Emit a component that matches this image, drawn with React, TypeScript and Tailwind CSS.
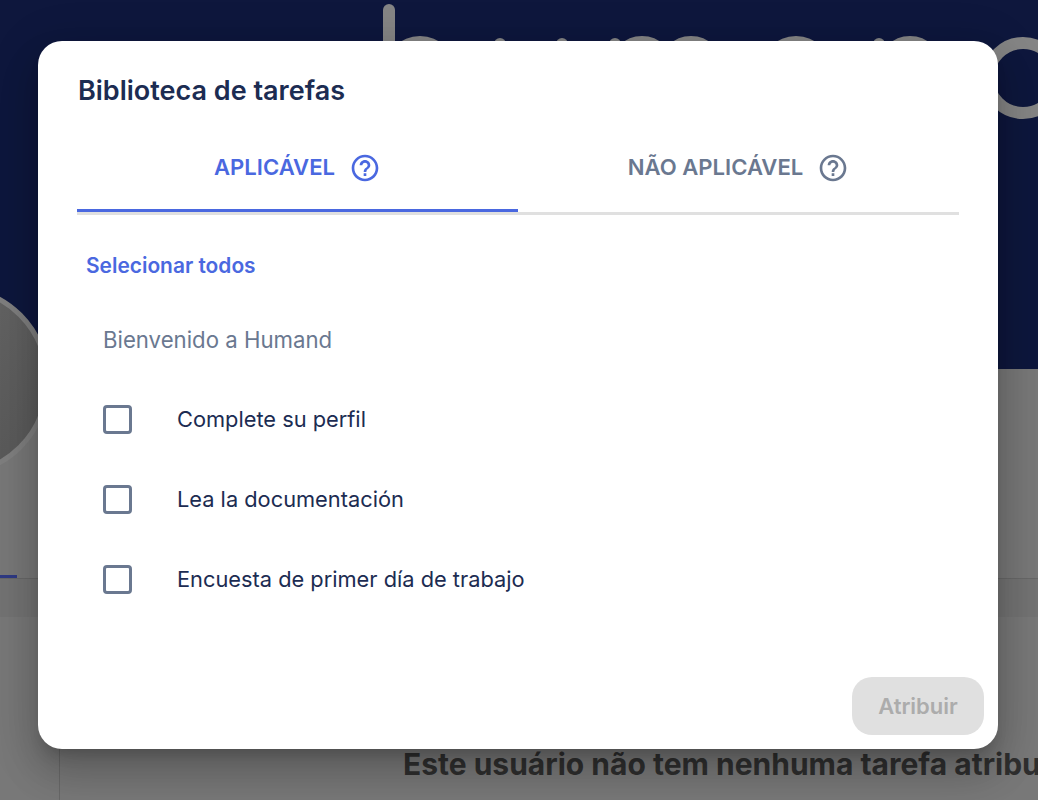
import React from "react";

function HelpIcon({ className }: { className: string }) {
  return (
    <svg viewBox="0 0 24 24" className={className} fill="currentColor" aria-hidden="true">
      <path d="M11 18h2v-2h-2v2zm1-16C6.48 2 2 6.48 2 12s4.48 10 10 10 10-4.48 10-10S17.52 2 12 2zm0 18c-4.41 0-8-3.59-8-8s3.59-8 8-8 8 3.59 8 8-3.59 8-8 8zm0-14c-2.21 0-4 1.79-4 4h2c0-1.1.9-2 2-2s2 .9 2 2c0 2-3 1.75-3 5h2c0-2.25 3-2.5 3-5 0-2.21-1.79-4-4-4z" />
    </svg>
  );
}

function Task({ label }: { label: string }) {
  return (
    <label className="flex h-20 items-center">
      <span className="ml-[65px] box-border size-[29px] shrink-0 rounded-[4px] border-[3px] border-[#6a7890] bg-white" />
      <span className="ml-[45px] text-[21.8px] leading-7 text-[#1c2c52]">{label}</span>
    </label>
  );
}

export default function App() {
  return (
    <div
      className="relative h-[800px] w-[1038px] overflow-hidden bg-[#787878]"
      style={{ fontFamily: "Inter, 'Liberation Sans', sans-serif" }}
    >
      <header className="relative h-[369px] overflow-hidden bg-[#0e173d]">
        <svg className="absolute inset-0" width="1038" height="369" aria-hidden="true">
          <g fill="none" stroke="#858585" strokeWidth="12" strokeLinecap="round">
            <path d="M389 10V70" />
            <path d="M390 72A30 30 0 0 1 450 72" />
            <path d="M500 44V70" />
            <path d="M562 44V70" />
            <path d="M615 44V70" />
            <path d="M616 68A26 26 0 0 1 668 68" />
            <path d="M665 68A26 26 0 0 1 717 68" />
            <path d="M766 72A30 30 0 0 1 826 72" />
            <path d="M879 44V70" />
            <path d="M884 68A26 26 0 0 1 936 68" />
            <circle cx="1023" cy="78" r="35" />
          </g>
        </svg>
      </header>
      <div className="absolute left-[-142px] top-[285px] size-[192px] rounded-full border-[5px] border-[#7f7f7f] bg-gradient-to-br from-[#6a6a6a] to-[#585858]" />

      <div className="relative h-[209px]">
        <div className="absolute bottom-0 left-0 h-[3px] w-[17px] bg-[#2f3a84]" />
      </div>
      <div className="h-[39px] border-t border-[#686868] bg-[#737373]" />
      <div className="flex h-[183px]">
        <div className="w-[60px] shrink-0 border-r border-[#686868]" />
        <p className="ml-[343px] mt-[129px] whitespace-nowrap text-[30px] font-bold leading-9 text-[#2f2f2f]">
          Este usuário não tem nenhuma tarefa atribuída
        </p>
      </div>

      <div
        role="dialog"
        className="absolute left-[38px] top-[41px] flex h-[708px] w-[960px] flex-col rounded-[24px] bg-white shadow-[0_11px_15px_-7px_rgba(0,0,0,0.2),0_24px_38px_3px_rgba(0,0,0,0.14),0_9px_46px_8px_rgba(0,0,0,0.12)]"
      >
        <h2 className="ml-10 mt-[33px] text-[27px] font-semibold leading-[34px] text-[#1c2c52]">
          Biblioteca de tarefas
        </h2>
        <div className="mx-[39px] mt-[19px] flex h-[88px] border-b-[3px] border-[#e0e0e0]">
          <div className="flex w-[441px] items-center justify-center gap-[14px] border-b-[3px] border-[#4a68e0] text-[#4a68e0]">
            <span className="text-[22.1px] font-semibold">APLICÁVEL</span>
            <HelpIcon className="size-8" />
          </div>
          <div className="flex w-[441px] items-center justify-center gap-[14px] border-b-[3px] border-transparent text-[#6a7890]">
            <span className="text-[22.1px] font-semibold">NÃO APLICÁVEL</span>
            <HelpIcon className="size-8" />
          </div>
        </div>
        <button className="ml-[48px] mt-[37px] self-start text-[20.9px] font-semibold leading-7 text-[#4a68e0]">
          Selecionar todos
        </button>
        <p className="ml-[65px] mt-[46px] text-[22.2px] leading-7 text-[#6a7890]">Bienvenido a Humand</p>
        <div className="mt-[25px] flex flex-col">
          <Task label="Complete su perfil" />
          <Task label="Lea la documentación" />
          <Task label="Encuesta de primer día de trabajo" />
        </div>
        <div className="mt-auto flex justify-end pb-[14px] pr-[14px]">
          <button className="h-[58px] w-[132px] rounded-[20px] bg-[#e0e0e0] text-[22px] font-semibold text-[#acacac]">
            Atribuir
          </button>
        </div>
      </div>
    </div>
  );
}
